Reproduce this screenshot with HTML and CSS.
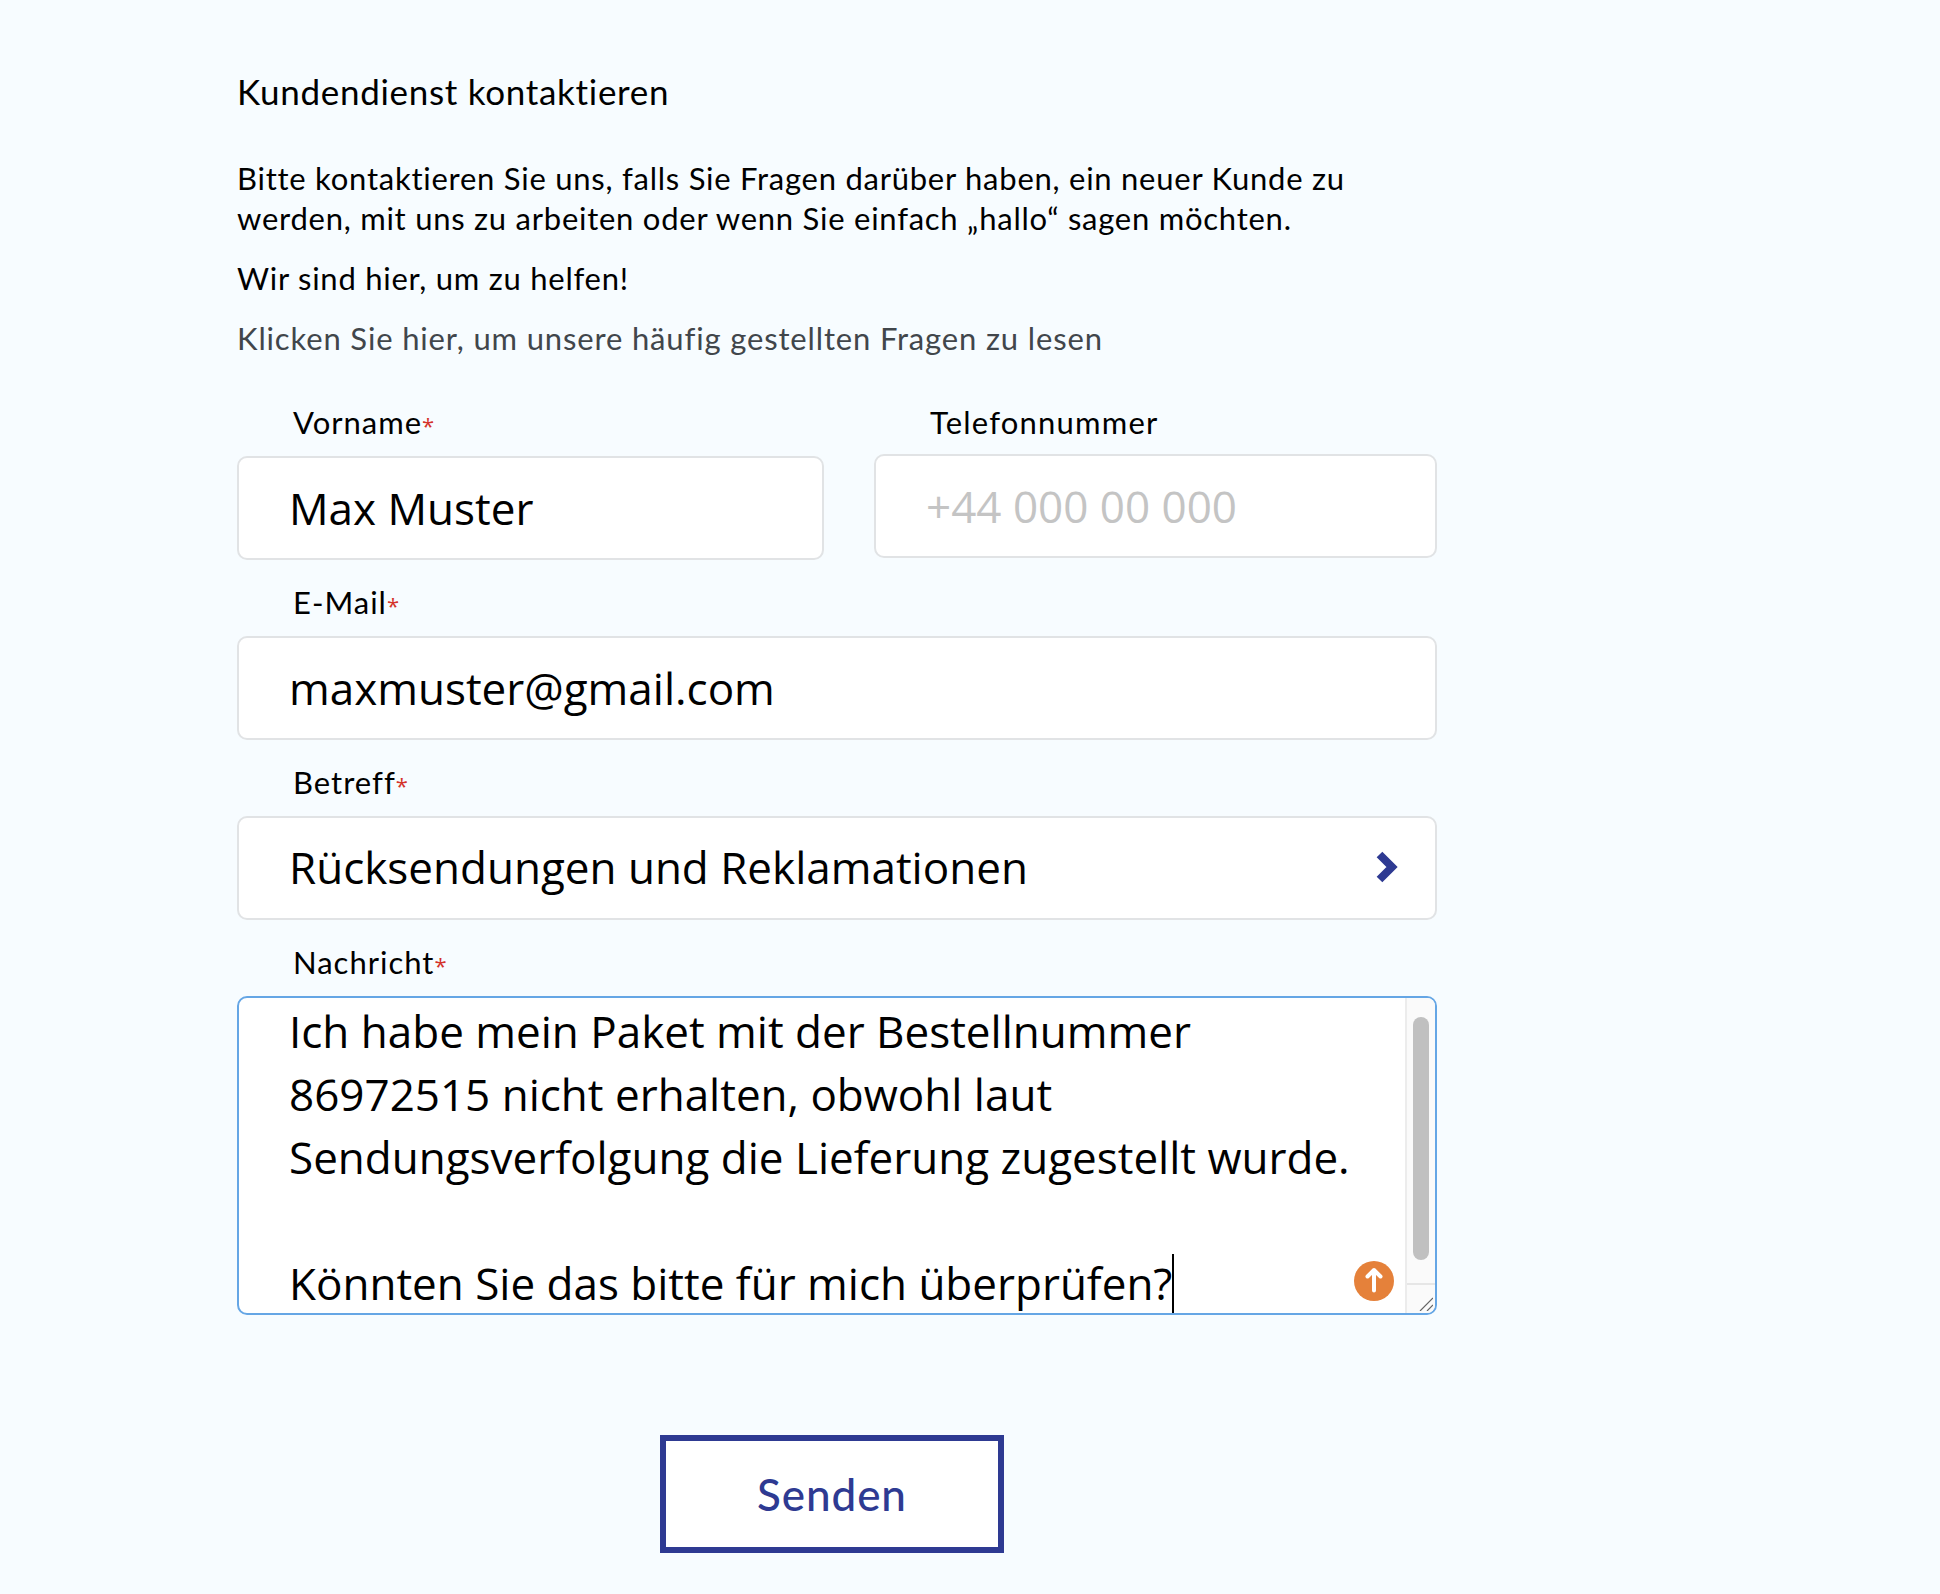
FILE: index.html
```html
<!DOCTYPE html>
<html lang="de">
<head>
<meta charset="utf-8">
<title>Kundendienst kontaktieren</title>
<link rel="stylesheet" href="styles.css">
</head>
<body>
<main class="page">
  <h1 class="title">Kundendienst kontaktieren</h1>
  <p class="intro">Bitte kontaktieren Sie uns, falls Sie Fragen darüber haben, ein neuer Kunde zu<br>werden, mit uns zu arbeiten oder wenn Sie einfach „hallo“ sagen möchten.</p>
  <p class="help">Wir sind hier, um zu helfen!</p>
  <a class="faq">Klicken Sie hier, um unsere häufig gestellten Fragen zu lesen</a>

  <form class="form">
    <div class="row">
      <div class="field">
        <label class="label">Vorname<span class="req">*</span></label>
        <div class="input">Max Muster</div>
      </div>
      <div class="field field-raised">
        <label class="label">Telefonnummer</label>
        <div class="input placeholder">+44 000 00 000</div>
      </div>
    </div>
    <div class="field">
      <label class="label">E-Mail<span class="req">*</span></label>
      <div class="input">maxmuster@gmail.com</div>
    </div>
    <div class="field">
      <label class="label">Betreff<span class="req">*</span></label>
      <div class="input select">
        <span>Rücksendungen und Reklamationen</span>
        <svg class="chevron" width="24" height="34" viewBox="0 0 24 34"><path d="M4.5 4.5 L17 17 L4.5 29.5" fill="none" stroke="#2e3a92" stroke-width="8"/></svg>
      </div>
    </div>
    <div class="field">
      <label class="label">Nachricht<span class="req">*</span></label>
      <div class="textarea">
        <div class="textarea-text">Ich habe mein Paket mit der Bestellnummer<br>86972515 nicht erhalten, obwohl laut<br>Sendungsverfolgung die Lieferung zugestellt wurde.<br><br>Könnten Sie das bitte für mich überprüfen?<span class="caret"></span></div>
        <div class="scrollbar">
          <div class="track"><div class="thumb"></div></div>
          <div class="corner">
            <svg width="14" height="14" viewBox="0 0 14 14"><path d="M1 14 L14 1 M8 14 L14 8" stroke="#666" stroke-width="1.2" fill="none"/></svg>
          </div>
        </div>
        <svg class="badge" width="40" height="40" viewBox="0 0 40 40"><circle cx="20" cy="20" r="20" fill="#e5813a"/><path d="M20 29.5 V9 M13.5 15.5 L20 9 L26.5 15.5" fill="none" stroke="#fff" stroke-width="4" stroke-linecap="round" stroke-linejoin="round"/></svg>
      </div>
    </div>
    <div class="actions"><button class="send" type="button">Senden</button></div>
  </form>
</main>
</body>
</html>
```
FILE: styles.css
```css
* { box-sizing: border-box; }
html, body { margin: 0; }
body {
  background: #f7fcff;
  color: #000;
  font-family: "Lato", "Noto Sans", sans-serif;
}
.page { width: 1437px; padding: 70px 0 40px 237px; }
.title { margin: 0 0 46px; font-size: 35px; line-height: 42px; font-weight: 400; letter-spacing: .7px; }
.intro { margin: 0 0 20px; font-size: 31px; line-height: 40px; letter-spacing: .75px; }
.help { margin: 0 0 20px; font-size: 31px; line-height: 40px; letter-spacing: .75px; }
.faq { display: block; font-size: 31px; line-height: 40px; color: #41464b; letter-spacing: .85px; }
.form { margin-top: 44px; display: flex; flex-direction: column; gap: 22px; }
.row { display: grid; grid-template-columns: 587px 563px; column-gap: 50px; }
.field-raised .label { margin-bottom: 12px; letter-spacing: 1.2px; }
.field { display: block; }
.label { display: block; height: 40px; margin-bottom: 14px; padding-left: 56px; font-size: 31px; line-height: 40px; letter-spacing: 1px; }
.req { color: #d4322a; font-family: "Open Sans", sans-serif; font-size: 22px; letter-spacing: 0; vertical-align: 0; }
.input {
  display: flex; align-items: center; height: 104px; padding: 0 50px;
  background: #fff; border: 2px solid #e1e3e5; border-radius: 10px;
  font-family: "Open Sans", sans-serif; font-size: 44px; color: #000;
}
.placeholder { color: #c4c4c4; }
.select { justify-content: space-between; padding-right: 36px; padding-bottom: 2px; }
.textarea {
  position: relative; display: flex; height: 319px; overflow: hidden;
  background: #fff; border: 2px solid #65a6e5; border-radius: 10px;
}
.textarea-text { flex: 1; padding: 0 0 0 50px; margin-top: 2px; font-family: "Open Sans", sans-serif; font-size: 44px; line-height: 63px; white-space: nowrap; }
.caret { display: inline-block; width: 2px; height: 60px; background: #000; vertical-align: -14px; }
.scrollbar { width: 30px; display: flex; flex-direction: column; background: #fafafa; border-left: 2px solid #ececec; }
.track { flex: 1; padding: 19px 6px 0 6px; }
.thumb { height: 243px; background: #c0c0c0; border-radius: 8px; }
.corner { height: 30px; padding: 0 2px 2px 0; border-top: 2px solid #e6e6e6; display: flex; align-items: flex-end; justify-content: flex-end; }
.badge { position: absolute; right: 41px; bottom: 12px; }
.actions { margin-top: 98px; padding-left: 423px; }
.send {
  display: block; width: 344px; height: 118px; background: #fff; border: 6px solid #2e3a92;
  font-family: "Lato", sans-serif; font-size: 44px; font-weight: 500; color: #2e3a92; letter-spacing: .9px;
}
```
